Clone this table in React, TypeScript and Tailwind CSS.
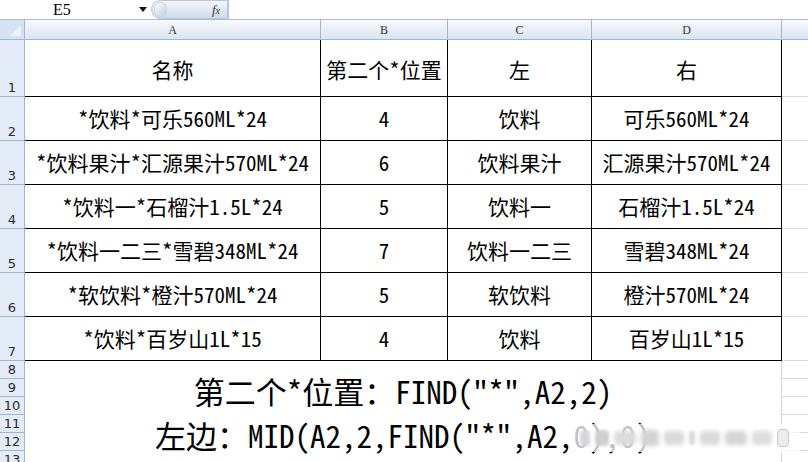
import React from "react";

const cellFont = "font-['Noto_Sans_Mono_CJK_SC','Liberation_Serif','Noto_Sans_CJK_SC',serif]";

const rows: [string, string, string, string][] = [
  ["*饮料*可乐560ML*24", "4", "饮料", "可乐560ML*24"],
  ["*饮料果汁*汇源果汁570ML*24", "6", "饮料果汁", "汇源果汁570ML*24"],
  ["*饮料一*石榴汁1.5L*24", "5", "饮料一", "石榴汁1.5L*24"],
  ["*饮料一二三*雪碧348ML*24", "7", "饮料一二三", "雪碧348ML*24"],
  ["*软饮料*橙汁570ML*24", "5", "软饮料", "橙汁570ML*24"],
  ["*饮料*百岁山1L*15", "4", "饮料", "百岁山1L*15"],
];

function RowHead({ n, tall }: { n: number; tall?: boolean }) {
  return (
    <div
      className={`flex justify-center border-r border-b border-[#9eb6ce] bg-[#e4ecf7] text-[13px] leading-none text-[#2b2b2b] font-['DejaVu_Sans',sans-serif] ${
        tall ? "items-end pb-[2px]" : "items-center"
      }`}
    >
      {n}
    </div>
  );
}

function ColHead({ label }: { label: string }) {
  return (
    <div className="flex items-center justify-center border-r border-b border-[#9eb6ce] bg-gradient-to-b from-[#f8fafd] to-[#dbe4f0] text-[12px] text-[#333] font-['Liberation_Serif',serif]">
      {label}
    </div>
  );
}

function Cell({ children }: { children?: React.ReactNode }) {
  return (
    <div
      className={`flex items-center justify-center border-r border-b border-black text-[21px] font-normal text-black ${cellFont}`}
    >
      {children}
    </div>
  );
}

export default function App() {
  return (
    <div className="relative h-[462px] w-[808px] overflow-hidden bg-white">
      {/* Formula bar */}
      <div className="flex h-[20px] items-stretch border-b border-[#a9bfd6] bg-white">
        <div className="relative flex w-[151px] items-center">
          <span className="ml-[53px] text-[16px] leading-none text-black font-['Liberation_Serif',serif]">E5</span>
          <svg className="absolute left-[139px] top-[7px]" width="8" height="5" viewBox="0 0 8 5">
            <path d="M0 0h8L4 5z" fill="#111" />
          </svg>
        </div>
        <div className="relative flex w-[77px] items-center justify-end rounded-l-full border border-[#b7c6da] bg-gradient-to-b from-[#f4f7fc] to-[#cfdbea] pr-[7px]">
          <div className="absolute left-[2px] top-[1px] h-[15px] w-[13px] rounded-full border border-[#c9d4e3] bg-gradient-to-br from-white to-[#c2cfe0]" />
          <span className="text-[13px] italic leading-none text-[#333] font-['Liberation_Serif',serif]">
            f<span className="text-[10px]">x</span>
          </span>
        </div>
        <div className="flex-1 border-l border-[#b7c6da]" />
      </div>

      {/* Sheet grid */}
      <div className="grid grid-cols-[25px_296px_127px_144px_190px_1fr] grid-rows-[20px_57px_repeat(6,44px)_repeat(6,18px)]">
        {/* header row */}
        <div className="relative border-r border-b border-[#9eb6ce] bg-[#d6e2f1]">
          <svg className="absolute right-[3px] bottom-[3px]" width="11" height="11" viewBox="0 0 11 11">
            <path d="M11 0V11H0z" fill="#eef3fa" />
          </svg>
        </div>
        <ColHead label="A" />
        <ColHead label="B" />
        <ColHead label="C" />
        <ColHead label="D" />
        <div className="border-b border-[#9eb6ce] bg-gradient-to-b from-[#f8fafd] to-[#dbe4f0]" />

        {/* row 1 */}
        <RowHead n={1} tall />
        <Cell>
          <span className="pt-[4px]">名称</span>
        </Cell>
        <Cell>
          <span className="pt-[4px]">第二个*位置</span>
        </Cell>
        <Cell>
          <span className="pt-[4px]">左</span>
        </Cell>
        <Cell>
          <span className="pt-[4px]">右</span>
        </Cell>
        <div className="border-b border-[#d0d7e5]" />

        {rows.map((r, i) => (
          <React.Fragment key={i}>
            <RowHead n={i + 2} tall />
            <Cell>{r[0]}</Cell>
            <Cell>{r[1]}</Cell>
            <Cell>{r[2]}</Cell>
            <Cell>{r[3]}</Cell>
            <div className="border-b border-[#d0d7e5]" />
          </React.Fragment>
        ))}

        {/* rows 8-13 */}
        <RowHead n={8} />
        <div
          className={`col-span-4 row-span-5 flex flex-col items-center border-r border-[#d0d7e5] pt-[8px] text-[31px] leading-[44px] text-black ${cellFont}`}
        >
          <div>第二个*位置：FIND(&quot;*&quot;,A2,2)</div>
          <div>左边：MID(A2,2,FIND(&quot;*&quot;,A2,0),0)</div>
        </div>
        <div className="border-b border-[#d0d7e5]" />
        {[9, 10, 11, 12].map((n) => (
          <React.Fragment key={n}>
            <RowHead n={n} />
            <div className="border-b border-[#d0d7e5]" />
          </React.Fragment>
        ))}
        <RowHead n={13} />
        <div className="col-span-4 border-r border-[#d0d7e5]" />
        <div />
      </div>

      {/* blurred watermark overlay */}
      <div className="absolute left-[574px] top-[424px] flex h-[28px] w-[226px] items-center gap-[5px] bg-white/75 px-[6px]">
        <div className="h-[16px] w-[10px] rounded-sm bg-[#d6d6d6] blur-[1.5px]" />
        <div className="h-[16px] w-[14px] rounded-sm bg-[#cfcfcf] blur-[1.5px]" />
        <div className="h-[14px] w-[22px] rounded-sm bg-[#dcdcdc] blur-[2px]" />
        <div className="h-[16px] w-[18px] rounded-sm bg-[#d3d3d3] blur-[2px]" />
        <div className="h-[14px] w-[20px] rounded-sm bg-[#dadada] blur-[2px]" />
        <div className="h-[14px] w-[6px] rounded-sm bg-[#d8d8d8] blur-[1.5px]" />
        <div className="h-[14px] w-[20px] rounded-sm bg-[#dadada] blur-[2px]" />
        <div className="h-[14px] w-[22px] rounded-sm bg-[#d6d6d6] blur-[2px]" />
        <div className="h-[14px] w-[20px] rounded-sm bg-[#dddddd] blur-[2px]" />
        <div className="h-[18px] w-[12px] rounded-sm border border-[#c8c8c8] bg-[#ececec]" />
      </div>
    </div>
  );
}
